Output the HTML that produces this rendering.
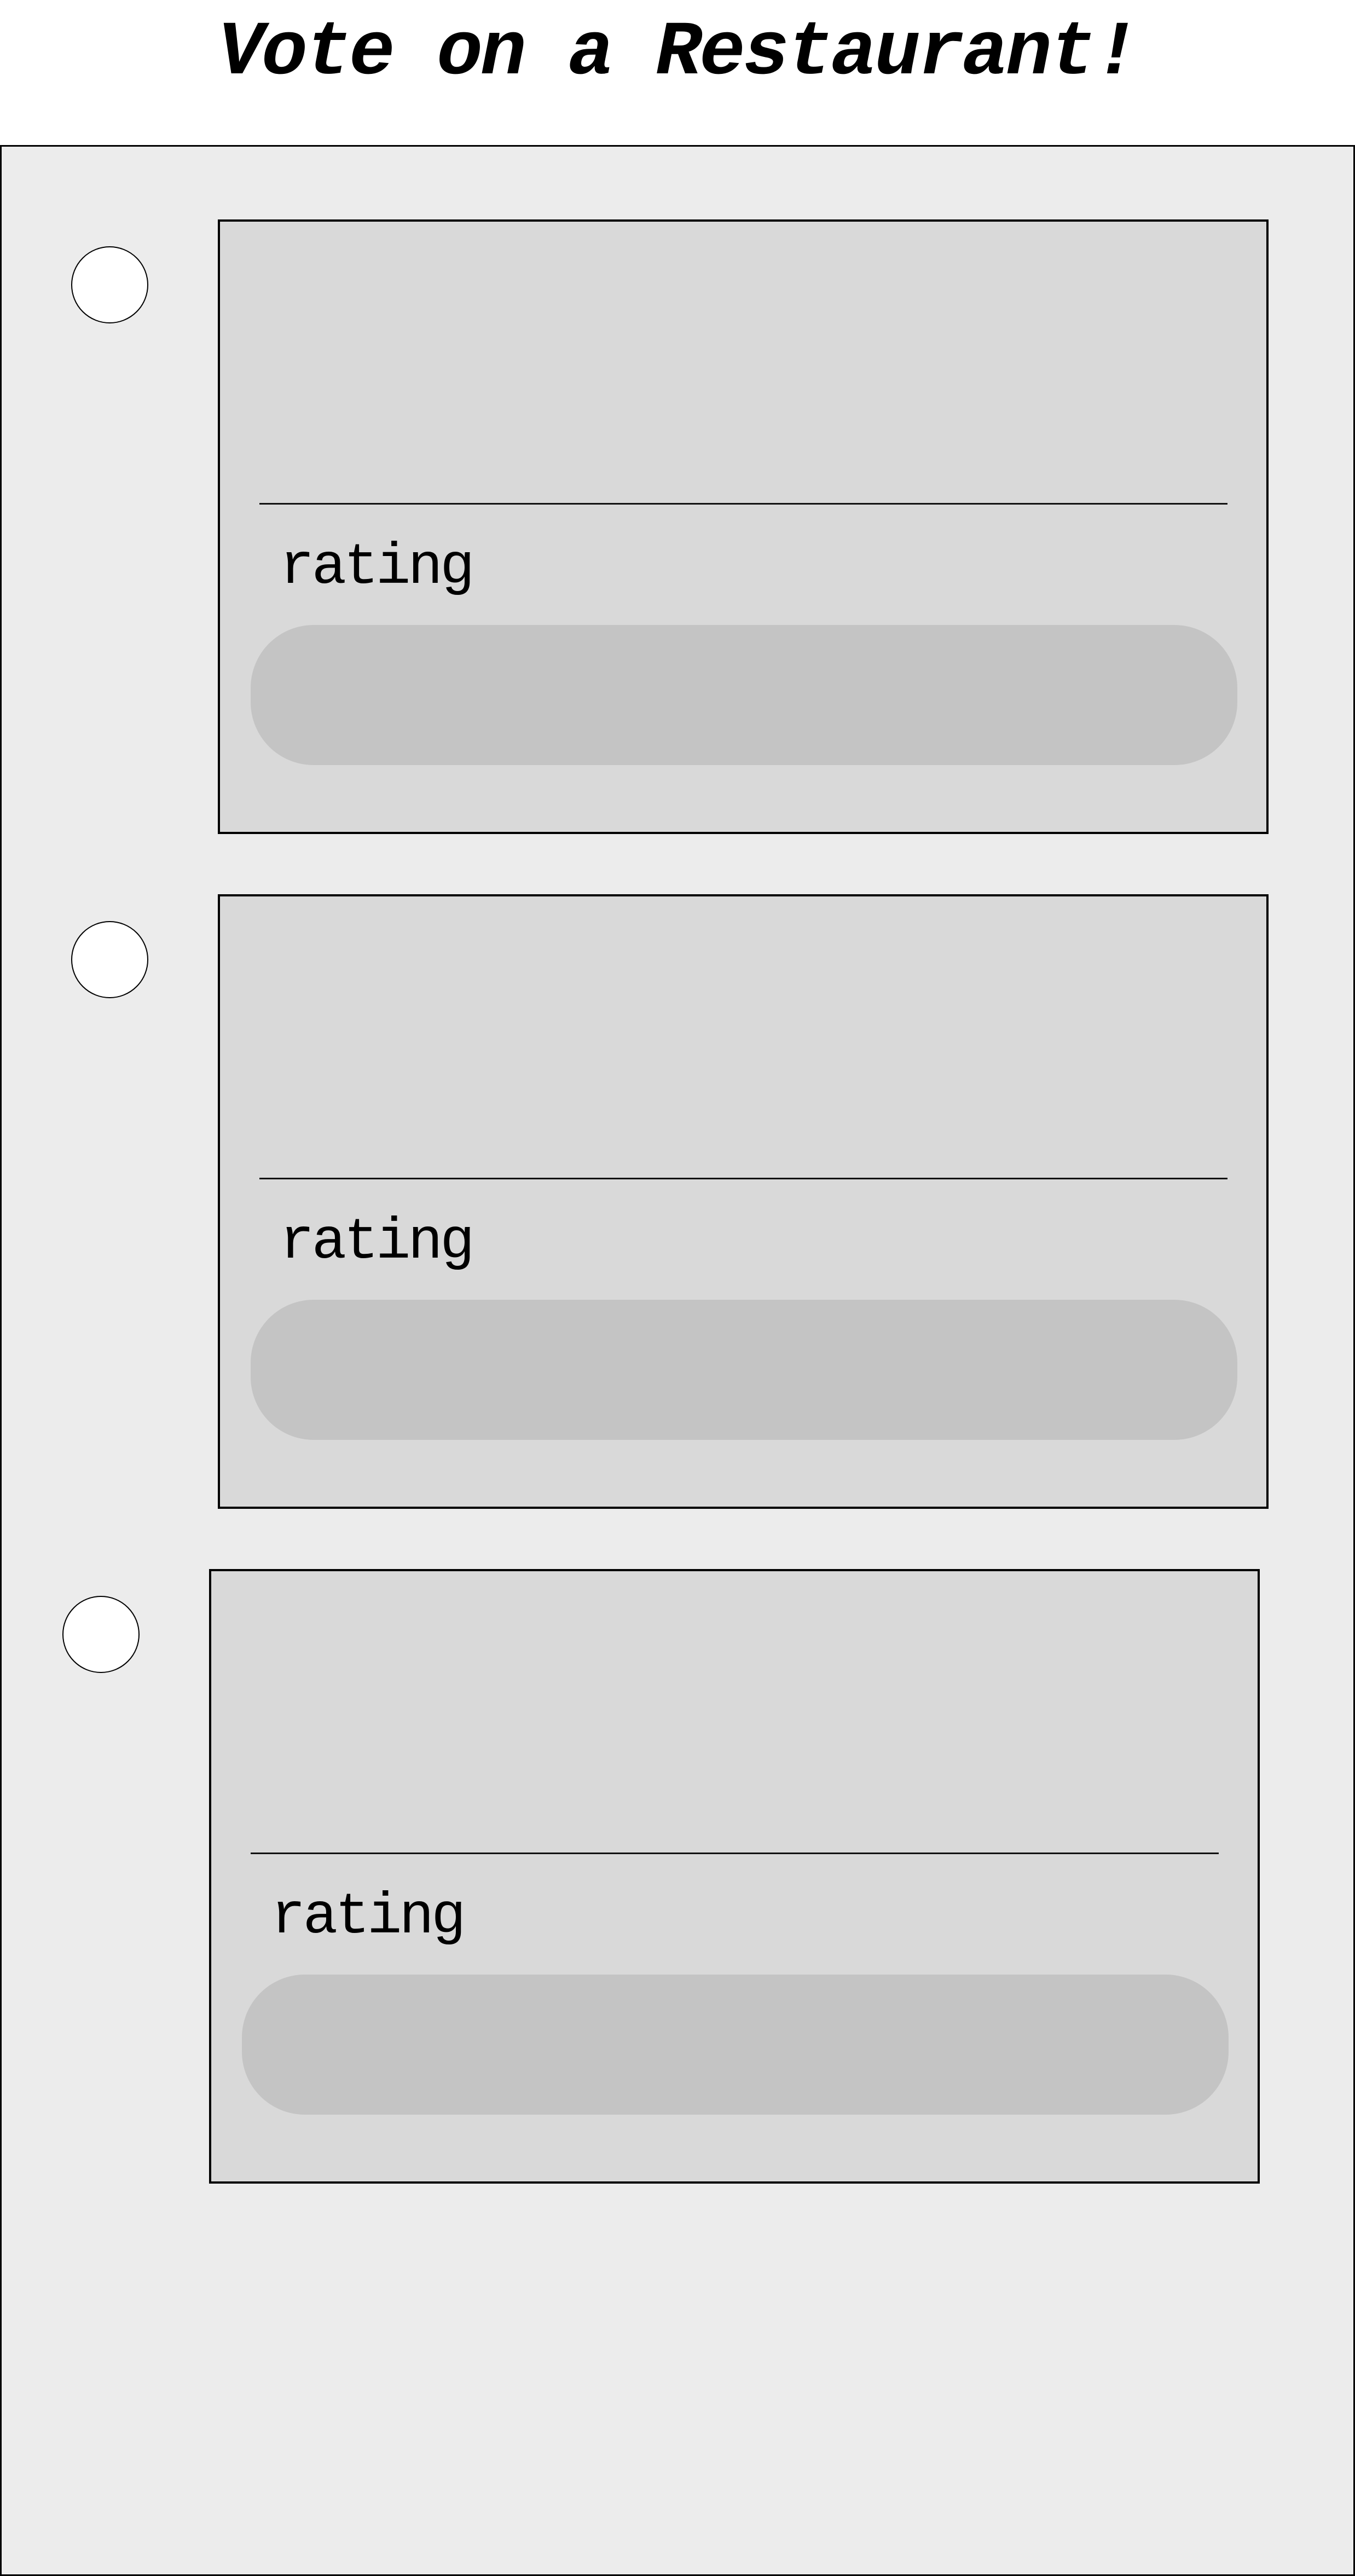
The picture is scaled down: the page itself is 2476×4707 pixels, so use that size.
<!DOCTYPE html>
<html><head><meta charset="utf-8"><style>
html,body{margin:0;padding:0;background:#fff;width:2476px;height:4707px;overflow:hidden;position:relative}
.title{position:absolute;left:0;width:2476px;text-align:center;font-family:"Liberation Mono",monospace;font-style:italic;font-weight:bold;font-size:140px;letter-spacing:-4px;line-height:140px;top:28px;color:#000}
.outer{position:absolute;left:0;top:265px;width:2470px;height:4436px;border:3px solid #000;background:#ececec}
.circ{position:absolute;width:137px;height:137px;border:2px solid #000;border-radius:50%;background:#fff}
.card{position:absolute;width:1912px;height:1115px;border:4px solid #000;background:#d9d9d9}
.line{position:absolute;left:72px;width:1769px;top:514px;height:3px;background:#111}
.rating{position:absolute;left:109px;top:572px;font-family:"Liberation Mono",monospace;font-size:106px;letter-spacing:-5px;line-height:120px;color:#000}
.pill{position:absolute;left:56px;top:737px;width:1803px;height:256px;border-radius:115px;background:#c4c4c4}
</style></head><body>
<div class="title">Vote on a Restaurant!</div>
<div class="outer"></div>
<div class="circ" style="left:130px;top:450px"></div>
<div class="card" style="left:398px;top:401px"><div class="line"></div><div class="rating">rating</div><div class="pill"></div></div>
<div class="circ" style="left:130px;top:1683px"></div>
<div class="card" style="left:398px;top:1634px"><div class="line"></div><div class="rating">rating</div><div class="pill"></div></div>
<div class="circ" style="left:114px;top:2916px"></div>
<div class="card" style="left:382px;top:2867px"><div class="line"></div><div class="rating">rating</div><div class="pill"></div></div>
</body></html>
